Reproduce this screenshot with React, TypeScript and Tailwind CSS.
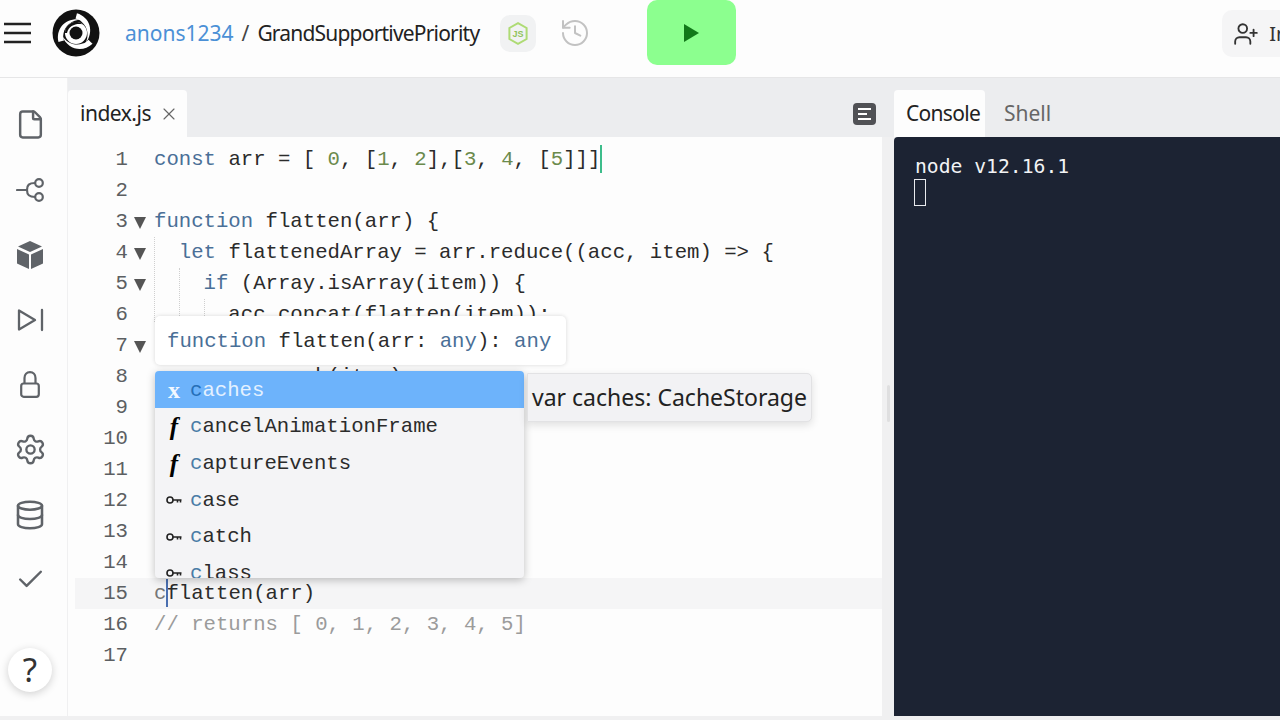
import type { ReactNode } from 'react';
import { Check, Database, File, History, Settings, UserPlus, X } from 'lucide-react';

const K = ({ children }: { children: ReactNode }) => <span className="text-[#4a6f97]">{children}</span>;
const N = ({ children }: { children: ReactNode }) => <span className="text-[#6b8a4c]">{children}</span>;

const LINES: { code: ReactNode; fold?: boolean }[] = [
  { code: <><K>const</K> arr = [ <N>0</N>, [<N>1</N>, <N>2</N>],[<N>3</N>, <N>4</N>, [<N>5</N>]]]</> },
  { code: '' },
  { code: <><K>function</K> flatten(arr) {'{'}</>, fold: true },
  { code: <>  <K>let</K> flattenedArray = arr.reduce((acc, item) =&gt; {'{'}</>, fold: true },
  { code: <>    <K>if</K> (Array.isArray(item)) {'{'}</>, fold: true },
  { code: '      acc.concat(flatten(item));' },
  { code: <>    {'}'} <K>else</K> {'{'}</>, fold: true },
  { code: '      acc.push(item);' },
  { code: '    }' },
  { code: <>    <K>return</K> acc;</> },
  { code: '  }, []);' },
  { code: <>  <K>return</K> flattenedArray;</> },
  { code: ' ' },
  { code: '' },
  { code: <><span className="text-[#777]">c</span>flatten(arr)</> },
  { code: <span className="text-[#9b9b9b]">// returns [ 0, 1, 2, 3, 4, 5]</span> },
  { code: '' },
];

const SUGGESTIONS: { label: string; kind: 'var' | 'fn' | 'key' }[] = [
  { label: 'caches', kind: 'var' },
  { label: 'cancelAnimationFrame', kind: 'fn' },
  { label: 'captureEvents', kind: 'fn' },
  { label: 'case', kind: 'key' },
  { label: 'catch', kind: 'key' },
  { label: 'class', kind: 'key' },
];

function Logo() {
  return (
    <svg width="48" height="48" viewBox="0 0 48 48">
      <circle cx="24" cy="24" r="23.5" fill="#111" />
      {[0, 120, 240].map(a => (
        <path key={a} transform={`rotate(${a} 24 24)`} d="M6.5 33C3.5 20 13 8.5 29 10.5C20 11 13 16.5 11.5 24.5C11 27.5 11 29 12 31.5C10 32 8 32.5 6.5 33Z" fill="#fff" />
      ))}
      <circle cx="24" cy="24" r="11" fill="#fff" />
      <path d="M13 24A11 11 0 0 1 31 15.5C25 14 17 16 15 24Z" fill="#111" />
      <circle cx="24" cy="24" r="6.5" fill="#111" />
    </svg>
  );
}

function NodeIcon() {
  return (
    <svg width="20" height="23" viewBox="0 0 20 23">
      <path d="M10 1.2L18.6 6V17L10 21.8L1.4 17V6Z" fill="none" stroke="#aedb74" strokeWidth="2" />
      <text x="10" y="15" textAnchor="middle" fontSize="9" fontWeight="700" fontFamily="Liberation Sans, sans-serif" fill="#8fc25a">JS</text>
    </svg>
  );
}

function BranchIcon() {
  return (
    <svg width="28" height="28" viewBox="0 0 28 28" fill="none" stroke="#5f6368" strokeWidth="2.2" strokeLinecap="round">
      <path d="M1 14H11M11 14C11 9 13 7 19 7M11 14C11 19 13 21 19 21" />
      <circle cx="23" cy="7" r="3.8" />
      <circle cx="23" cy="21" r="3.8" />
    </svg>
  );
}

function BoxIcon() {
  return (
    <svg width="28" height="30" viewBox="0 0 28 30" fill="#5f6368">
      <path d="M14 1L26 6.5L14 12L2 6.5Z" />
      <path d="M1 9L13 14.5V29L1 23.5Z" />
      <path d="M27 9L15 14.5V29L27 23.5Z" />
    </svg>
  );
}

function RunStepIcon() {
  return (
    <svg width="28" height="24" viewBox="0 0 28 24" fill="none" stroke="#5f6368" strokeWidth="2.3" strokeLinejoin="round" strokeLinecap="round">
      <path d="M3 2.5V21.5L19 12Z" />
      <path d="M26 2V22" />
    </svg>
  );
}

function LockIcon() {
  return (
    <svg width="20" height="27" viewBox="0 0 20 27" fill="none" stroke="#5f6368" strokeWidth="2.2">
      <rect x="1.2" y="12.5" width="17.6" height="13.3" rx="2.5" />
      <path d="M4.5 12.5V7C4.5 3.5 6.8 1.2 10 1.2C13.2 1.2 15.5 3.5 15.5 7V12.5" />
    </svg>
  );
}

function KeyIcon() {
  return (
    <svg width="16" height="10" viewBox="0 0 16 10" fill="none" stroke="#222" strokeWidth="1.6">
      <circle cx="4" cy="5" r="3" />
      <path d="M7 5H15.5M11.5 5V7.5M14.5 5V7.5" />
    </svg>
  );
}

function SuggestIcon({ kind }: { kind: 'var' | 'fn' | 'key' }) {
  if (kind === 'key') return <KeyIcon />;
  if (kind === 'fn') {
    return <span className="font-['Liberation_Serif',serif] italic font-bold text-[25px] leading-none text-black">f</span>;
  }
  return <span className="font-['Liberation_Serif',serif] font-bold text-[24px] leading-none text-[#f2f8ff]">x</span>;
}

function SidebarIcon({ children }: { children: ReactNode }) {
  return <div className="h-[65px] w-[60px] flex items-center justify-center text-[#5f6368]">{children}</div>;
}

function Sidebar() {
  return (
    <div className="w-[68px] shrink-0 bg-[#fdfdfd] border-r border-[#f0f0f1] flex flex-col pt-[14px] pb-[24px]">
      <SidebarIcon><File size={31} strokeWidth={1.9} /></SidebarIcon>
      <SidebarIcon><BranchIcon /></SidebarIcon>
      <SidebarIcon><BoxIcon /></SidebarIcon>
      <SidebarIcon><RunStepIcon /></SidebarIcon>
      <SidebarIcon><LockIcon /></SidebarIcon>
      <SidebarIcon><Settings size={33} strokeWidth={1.7} /></SidebarIcon>
      <SidebarIcon><Database size={32} strokeWidth={1.9} /></SidebarIcon>
      <SidebarIcon><Check size={31} strokeWidth={1.9} /></SidebarIcon>
      <div className="mt-auto ml-[8px] w-[44px] h-[44px] rounded-full bg-white shadow-[0_2px_8px_rgba(0,0,0,0.18)] flex items-center justify-center font-['Noto_Sans',sans-serif] text-[33px] text-[#333]">
        ?
      </div>
    </div>
  );
}

function Editor() {
  return (
    <div className="relative flex-1 bg-[#fdfdfd] pt-[7px] font-['Liberation_Mono',monospace] text-[20.67px] text-[#2b2b2b] whitespace-pre">
      {LINES.map((line, i) => (
        <div key={i} className={`flex h-[31px] items-center ml-[7px] ${i === 14 ? 'bg-[#f5f5f6]' : ''}`}>
          <span className="w-[53px] text-right text-[#5c5f62]">{i + 1}</span>
          <span className="w-[26px] flex justify-center pr-[2px]">
            {line.fold && <span className="block w-0 h-0 mt-[2px] border-x-[6.5px] border-x-transparent border-t-[12px] border-t-[#555]" />}
          </span>
          <span>{line.code}</span>
        </div>
      ))}

      {/* indent guides */}
      <div className="absolute left-[86px] top-[100px] h-[85px] border-l border-dotted border-[#cfcfcf]" />
      <div className="absolute left-[111px] top-[131px] h-[54px] border-l border-dotted border-[#cfcfcf]" />
      <div className="absolute left-[136px] top-[162px] h-[23px] border-l border-dotted border-[#cfcfcf]" />

      {/* carets */}
      <div className="absolute left-[532px] top-[8px] w-[2px] h-[28px] bg-[#3dbd8b]" />
      <div className="absolute left-[98px] top-[442px] w-[2px] h-[28px] bg-[#4a6fb0]" />

      {/* hover tooltip */}
      <div className="absolute left-[87px] top-[179px] w-[411px] h-[49px] flex items-center pl-[12px] pt-[2px] bg-white rounded-[5px] shadow-[0_0_4px_rgba(0,0,0,0.15)]">
        <K>function</K> flatten(arr: <K>any</K>): <K>any</K>
      </div>

      {/* suggestions */}
      <div className="absolute left-[87px] top-[234px] w-[369px] h-[207px] bg-[#f4f4f6] rounded-[4px] overflow-hidden shadow-[0_2px_8px_rgba(0,0,0,0.25)]">
        {SUGGESTIONS.map((s, i) => (
          <div key={s.label} className={`flex items-center h-[36.6px] pt-[2px] ${i === 0 ? 'bg-[#6db3fb] text-[#e4f1ff]' : 'text-[#2b2b2b]'}`}>
            <span className="w-[35px] shrink-0 flex justify-center pl-[3px]">
              <SuggestIcon kind={s.kind} />
            </span>
            <span className={i === 0 ? 'text-[#256fb8]' : 'text-[#4a7ca6]'}>c</span>
            {s.label.slice(1)}
          </div>
        ))}
      </div>

      {/* details */}
      <div className="absolute left-[459px] top-[236px] w-[285px] h-[49px] flex items-center pl-[4px] bg-[#f2f2f4] rounded-r-[5px] border border-[#e2e2e4] shadow-[0_3px_8px_rgba(0,0,0,0.12)] font-['Noto_Sans',sans-serif] text-[23px] text-[#222]">
        var caches: CacheStorage
      </div>
    </div>
  );
}

export default function App() {
  return (
    <div className="w-[1280px] h-[720px] overflow-hidden flex flex-col bg-[#f0f0f1] font-['Noto_Sans',sans-serif]">
      <header className="h-[78px] shrink-0 flex items-start bg-[#fdfdfd] border-b border-[#e6e6e7] overflow-hidden">
        <div className="w-[4px] shrink-0" />
        <svg className="shrink-0 mt-[22px]" width="27" height="22" viewBox="0 0 27 22" stroke="#222" strokeWidth="2.6">
          <path d="M0 2H27M0 11H27M0 20H27" />
        </svg>
        <div className="shrink-0 ml-[21px] mt-[9px]"><Logo /></div>
        <div className="shrink-0 ml-[25px] mt-[17px] flex items-center h-[34px] text-[21px] whitespace-nowrap">
          <span className="text-[#4b90d6]">anons1234</span>
          <span className="mx-[8px] text-[#444]">/</span>
          <span className="text-[#222] tracking-[-0.8px]">GrandSupportivePriority</span>
        </div>
        <div className="shrink-0 ml-[21px] mt-[15px] w-[36px] h-[37px] rounded-[10px] bg-[#f1f2f3] flex items-center justify-center">
          <NodeIcon />
        </div>
        <History className="shrink-0 ml-[23px] mt-[17px] text-[#c2c2c2]" size={32} strokeWidth={1.5} />
        <div className="shrink-0 ml-[56px] w-[89px] h-[65px] rounded-[10px] bg-[#8cff8f] flex items-center justify-center">
          <div className="w-0 h-0 border-y-[9px] border-y-transparent border-l-[15px] border-l-[#12781a]" />
        </div>
        <div className="shrink-0 ml-[486px] mt-[10px] w-[90px] h-[47px] rounded-[10px] bg-[#f5f5f6] flex items-center pl-[11px] gap-[10px] text-[20px] text-[#333]">
          <UserPlus size={26} strokeWidth={1.7} className="shrink-0" />
          Invite
        </div>
      </header>

      <div className="flex flex-1 min-h-0 pb-[4px]">
        <Sidebar />
        <div className="w-[814px] shrink-0 flex flex-col">
          <div className="h-[59px] shrink-0 bg-[#ecedef] flex items-end justify-between pr-[6px]">
            <div className="w-[119px] h-[47px] bg-[#fdfdfd] rounded-t-[4px] flex items-center pl-[12px] gap-[8px] text-[21px] text-[#222]">
              <span className="tracking-[-0.5px]">index.js</span>
              <X size={20} strokeWidth={1.4} className="text-[#666]" />
            </div>
            <div className="mb-[12px] w-[23px] h-[22px] rounded-[4px] bg-[#505155] flex flex-col justify-center gap-[3px] pl-[5px]">
              <div className="w-[13px] h-[2px] bg-white" />
              <div className="w-[9px] h-[2px] bg-white" />
              <div className="w-[13px] h-[2px] bg-white" />
            </div>
          </div>
          <Editor />
        </div>

        {/* divider */}
        <div className="w-[12px] shrink-0 flex flex-col items-center">
          <div className="h-[59px] w-full shrink-0 bg-[#ecedef]" />
          <div className="mt-[248px] w-[3px] h-[37px] rounded-full bg-[#dfdfe0]" />
        </div>

        <div className="flex-1 flex flex-col">
          <div className="h-[59px] shrink-0 bg-[#ecedef] flex items-end text-[21px]">
            <div className="w-[91px] h-[47px] bg-[#fdfdfd] rounded-t-[4px] flex items-center pl-[12px] text-[#222]">
              <span className="tracking-[-0.7px]">Console</span>
            </div>
            <div className="h-[47px] flex items-center ml-[19px] text-[#666]">Shell</div>
          </div>
          <div className="flex-1 bg-[#1c2333] rounded-tl-[4px] pt-[18px] pl-[21px] font-['DejaVu_Sans_Mono',monospace] text-[19.7px] text-[#f2f3f5]">
            <div className="h-[24px] leading-[24px]">node v12.16.1</div>
            <div className="-ml-[1px] w-[12px] h-[27px] border-[1.5px] border-[#e8eaee]" />
          </div>
        </div>
      </div>
    </div>
  );
}
